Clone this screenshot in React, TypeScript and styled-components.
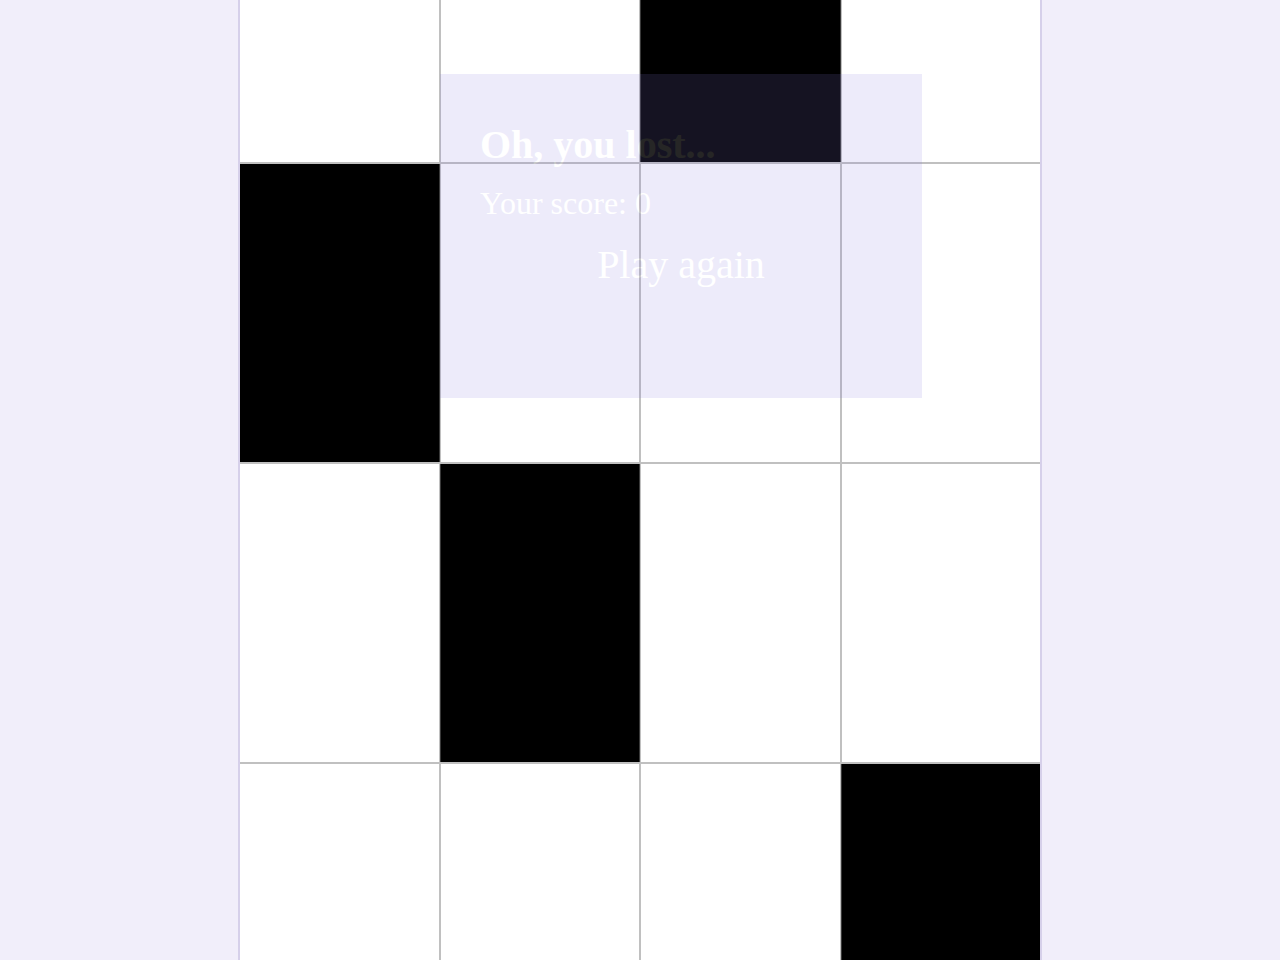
import React, { FC } from "react";
import styled, { createGlobalStyle, css } from "styled-components";

const GlobalStyle = createGlobalStyle`
  html, body {
    margin: 0;
    padding: 0;
    background: #f1eefa;
    font-family: "Liberation Serif", "Times New Roman", serif;
  }
`;

const Page = styled.div`
  height: 960px;
  overflow: hidden;
  background: #f1eefa;
`;

const Board = styled.div`
  position: relative;
  width: 800px;
  height: 960px;
  margin: 0 auto;
  border-left: 2px solid #d6d0ea;
  border-right: 2px solid #d6d0ea;
  background: #ffffff;
  overflow: hidden;
`;

const Track = styled.div`
  display: flex;
  flex-direction: column;
`;

const Row = styled.div`
  display: flex;
  height: 300px;
  box-sizing: border-box;
  border-top: 1px solid #c0c0c0;
  border-bottom: 1px solid #c0c0c0;
`;

interface TileProps {
  readonly dark?: boolean;
}

const Tile = styled.div<TileProps>`
  flex: 1;
  box-sizing: border-box;
  border-left: 1px solid #c0c0c0;
  border-right: 1px solid #c0c0c0;
  background: #ffffff;

  &:first-child {
    border-left: 0;
  }
  &:last-child {
    border-right: 0;
  }

  ${(props) =>
    props.dark
      ? css`
          background: #000000;
          border-color: #3a3a3a;
        `
      : ""}
`;

const Overlay = styled.div`
  position: absolute;
  left: 200px;
  top: 74px;
  width: 482px;
  height: 324px;
  box-sizing: border-box;
  padding: 47px 40px 0;
  background: #8a7ee0;
  opacity: 0.15;
  color: #ffffff;
  will-change: opacity;
`;

const Title = styled.h2`
  margin: 0;
  font-size: 40px;
  font-weight: bold;
`;

const Score = styled.p`
  margin: 17px 0 0;
  font-size: 32px;
`;

const PlayAgain = styled.button`
  display: block;
  margin: 19px auto 0;
  padding: 0;
  border: 0;
  background: none;
  color: #ffffff;
  font-family: inherit;
  font-size: 40px;
  cursor: pointer;
`;

const rows: number[] = [2, 0, 1, 3];

const App: FC = () => (
  <Page>
    <GlobalStyle />
    <Board>
      <Track style={{ marginTop: -137 }}>
        {rows.map((dark, r) => (
          <Row key={r}>
            {[0, 1, 2, 3].map((c) => (
              <Tile key={c} dark={c === dark} />
            ))}
          </Row>
        ))}
      </Track>
      <Overlay>
        <Title>Oh, you lost...</Title>
        <Score>Your score: 0</Score>
        <PlayAgain>Play again</PlayAgain>
      </Overlay>
    </Board>
  </Page>
);

export default App;
